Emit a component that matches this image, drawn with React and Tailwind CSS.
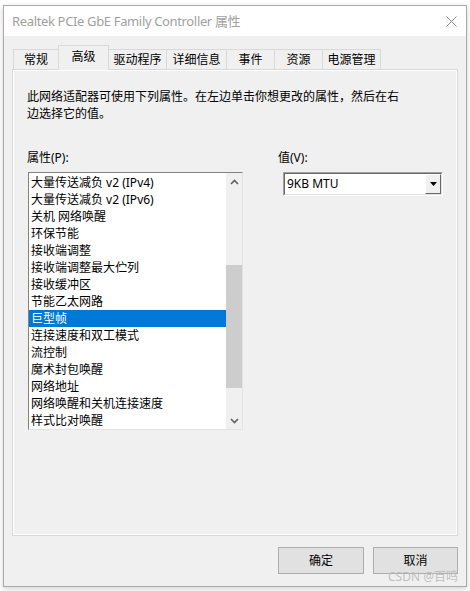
import { useState } from "react";

const ui = { fontFamily: '"Noto Sans", "Noto Sans CJK SC", sans-serif' };

const tabs = ["常规", "高级", "驱动程序", "详细信息", "事件", "资源", "电源管理"];
const tabWidths = ["w-[46px]", "w-[51px]", "w-[58px]", "w-[60px]", "w-[48px]", "w-[48px]", "w-[58px]"];

const props = [
  "大量传送减负 v2 (IPv4)",
  "大量传送减负 v2 (IPv6)",
  "关机 网络唤醒",
  "环保节能",
  "接收端调整",
  "接收端调整最大伫列",
  "接收缓冲区",
  "节能乙太网路",
  "巨型帧",
  "连接速度和双工模式",
  "流控制",
  "魔术封包唤醒",
  "网络地址",
  "网络唤醒和关机连接速度",
  "样式比对唤醒",
];

/* small scroll arrow */
const Chevron = ({ down }) => (
  <svg width="9" height="6" viewBox="0 0 9 6" className={down ? "rotate-180" : ""}>
    <path d="M1 5 L4.5 1.5 L8 5" fill="none" stroke="#606060" strokeWidth="1.6" />
  </svg>
);

export default function App() {
  const [selected, setSelected] = useState("巨型帧");

  return (
    <div className="w-[470px] h-[591px] bg-white pt-[5px] pl-[3px] relative" style={ui}>
      {/* WINDOW */}
      <div className="w-[464px] h-[582px] border border-[#aaaaaa] bg-[#f0f0f0] shadow-[0_2px_6px_rgba(0,0,0,0.18)] flex flex-col">
        {/* TITLE BAR */}
        <div className="h-[30px] bg-white flex items-center justify-between pl-[8px] pr-[9px]">
          <span className="text-[13px] text-[#a0a0a0] leading-none tracking-[-0.35px]">
            Realtek PCIe GbE Family Controller 属性
          </span>
          <svg width="11" height="11" viewBox="0 0 11 11">
            <path d="M0.5 0.5 L10.5 10.5 M10.5 0.5 L0.5 10.5" stroke="#8a8a8a" strokeWidth="1" />
          </svg>
        </div>

        {/* BODY */}
        <div className="flex-1 flex flex-col pl-[8px] pr-[7px] pt-[9px]">
          {/* TABS */}
          <div className="flex items-end h-[25px] -mb-px pl-px relative z-10">
            {tabs.map((t, i) => {
              const active = i === 1;
              return (
                <div
                  key={t}
                  className={
                    tabWidths[i] +
                    " flex items-center justify-center text-[12px] text-black border-t border-r border-[#d9d9d9] " +
                    (i === 0 ? "border-l " : "") +
                    (active
                      ? "h-[25px] bg-[#f0f0f0] border-l border-[#d9d9d9] -ml-px pb-[3px]"
                      : "h-[21px] bg-[#f0f0f0] border-b border-b-[#d9d9d9]")
                  }
                >
                  {t}
                </div>
              );
            })}
          </div>

          {/* PANEL */}
          <div className="w-[446px] h-[467px] border border-[#d9d9d9] shadow-[inset_1px_1px_0_#fff,inset_-1px_-1px_0_#fff] pl-[14px] pt-[18px]">
            <p className="text-[12px] leading-[17px] text-black w-[380px]">
              此网络适配器可使用下列属性。在左边单击你想更改的属性，然后在右边选择它的值。
            </p>

            <div className="flex mt-[27px]">
              {/* LEFT: PROPERTY LIST */}
              <div className="w-[251px]">
                <div className="text-[12px] leading-[17px] h-[17px]">属性(P):</div>
                <div className="mt-[6px] ml-px w-[215px] h-[258px] border border-t-[#828282] border-l-[#828282] border-r-[#e3e3e3] border-b-[#e3e3e3] bg-white flex">
                  <div className="flex-1 pt-px">
                    {props.map((p) => (
                      <div
                        key={p}
                        onClick={() => setSelected(p)}
                        className={
                          "h-[17px] leading-[17px] text-[12px] pl-[2px] whitespace-nowrap " +
                          (selected === p ? "bg-[#0078d7] text-white" : "text-black")
                        }
                      >
                        {p}
                      </div>
                    ))}
                  </div>
                  {/* SCROLLBAR */}
                  <div className="w-[16px] bg-[#f0f0f0] flex flex-col">
                    <div className="h-[17px] flex items-center justify-center">
                      <Chevron />
                    </div>
                    <div className="flex-1 flex flex-col">
                      <div className="h-[75px]" />
                      <div className="h-[123px] bg-[#cdcdcd]" />
                    </div>
                    <div className="h-[17px] flex items-center justify-center">
                      <Chevron down />
                    </div>
                  </div>
                </div>
              </div>

              {/* RIGHT: VALUE */}
              <div>
                <div className="text-[12px] leading-[17px] h-[17px]">值(V):</div>
                <div className="mt-[6px] ml-[5px] w-[160px] h-[24px] border border-t-[#a0a0a0] border-l-[#a0a0a0] border-r-white border-b-white">
                  <div className="h-full border border-t-[#696969] border-l-[#696969] border-r-[#e3e3e3] border-b-[#e3e3e3] bg-white flex items-center">
                    <span className="flex-1 text-[12px] pl-[2px] text-black">9KB MTU</span>
                    <div className="w-[16px] h-full bg-[#f0f0f0] border border-t-white border-l-white border-r-[#696969] border-b-[#696969] flex items-center justify-center">
                      <svg width="7" height="4" viewBox="0 0 7 4">
                        <path d="M0 0 H7 L3.5 4 Z" fill="#000" />
                      </svg>
                    </div>
                  </div>
                </div>
              </div>
            </div>
          </div>

          {/* BUTTONS */}
          <div className="flex justify-end gap-[9px] mt-[11px] pr-px">
            <button className="w-[86px] h-[27px] bg-[#e1e1e1] border border-[#adadad] text-[12px] text-black">
              确定
            </button>
            <button className="w-[85px] h-[27px] bg-[#e1e1e1] border border-[#adadad] text-[12px] text-black">
              取消
            </button>
          </div>
        </div>
      </div>

      {/* WATERMARK */}
      <div className="absolute left-[388px] top-[571px] text-[12px] text-[#b8b8b8]/90 leading-none">
        CSDN @百鸣
      </div>
    </div>
  );
}
